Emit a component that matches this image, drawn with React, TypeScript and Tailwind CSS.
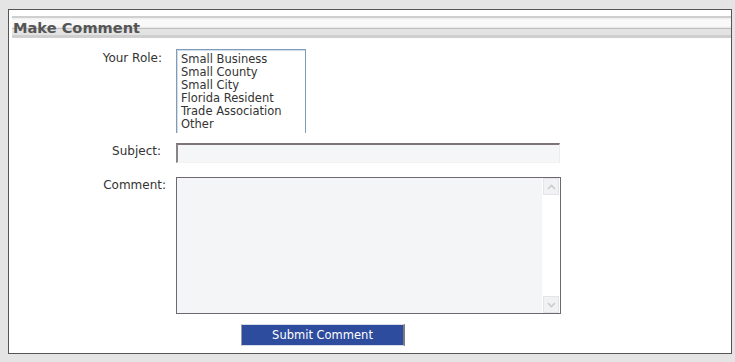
import React from "react";

const font = { fontFamily: '"DejaVu Sans", Verdana, sans-serif' };

export default function App() {
  const roles = [
    "Small Business",
    "Small County",
    "Small City",
    "Florida Resident",
    "Trade Association",
    "Other",
  ];
  return (
    <div
      className="w-[735px] h-[362px] bg-[#e4e4e4] pt-[9px] pl-[8px] overflow-hidden"
      style={font}
    >
      <div className="w-[724px] h-[345px] border border-[#555555] bg-white flex flex-col">
        {/* header bar */}
        <div className="mt-[6px] ml-[3px] h-[22px] relative bg-[linear-gradient(to_bottom,#cfcfcf_0px,#cfcfcf_2px,#ececec_2px,#f9f9f9_4px,#f9f9f9_10px,#e6e6e6_12px,#bfbfbf_12px,#bfbfbf_13px,#e3e3e3_13px,#e3e3e3_19px,#cfcfcf_19px,#cfcfcf_22px)]">
          <span className="absolute left-[1px] top-[2px] text-[14.6px] font-bold leading-[20px] text-[#555555]">
            Make Comment
          </span>
        </div>

        {/* Your Role */}
        <div className="flex mt-[11px]">
          <div className="w-[153px] text-right text-[12px] leading-[13px] text-[#333333] pt-[3px]">
            Your Role:
          </div>
          <div className="ml-[14px] w-[130px] h-[84px] border-t border-l border-r border-[#7f9db9] overflow-hidden">
            <div className="border-t border-l border-[#d3dce8] h-full pl-[3px] pt-[2px]">
              {roles.map((r) => (
                <div
                  key={r}
                  className="text-[11.5px] leading-[13px] text-[#333333] whitespace-nowrap"
                >
                  {r}
                </div>
              ))}
            </div>
          </div>
        </div>

        {/* Subject */}
        <div className="flex mt-[10px]">
          <div className="w-[152px] text-right text-[12px] leading-[13px] text-[#333333] pt-[2px]">
            Subject:
          </div>
          <div className="ml-[15px] w-[384px] h-[20px] bg-[#f5f6f7] border-t-2 border-l-2 border-t-[#7d7575] border-l-[#8a8585] border-r border-b border-r-[#ececec] border-b-[#f2f2f2]" />
        </div>

        {/* Comment */}
        <div className="flex mt-[14px]">
          <div className="w-[157px] text-right text-[12px] leading-[13px] text-[#333333] pt-[2px]">
            Comment:
          </div>
          <div className="ml-[10px] w-[385px] h-[137px] border border-[#6e6670] bg-[#f4f5f7] flex">
            <div className="flex-1" />
            <div className="w-[18px] bg-white flex flex-col justify-between pr-[1px]">
              <div className="h-[17px] w-[16px] ml-[1px] border border-[#e2e4e6] bg-[#f1f2f3] flex items-center justify-center">
                <svg width="9" height="6" viewBox="0 0 9 6">
                  <path d="M1 5 L4.5 1.5 L8 5" fill="none" stroke="#c9cbcd" strokeWidth="1.6" />
                </svg>
              </div>
              <div className="h-[17px] w-[16px] ml-[1px] border border-[#e2e4e6] bg-[#f1f2f3] flex items-center justify-center">
                <svg width="9" height="6" viewBox="0 0 9 6">
                  <path d="M1 1 L4.5 4.5 L8 1" fill="none" stroke="#c9cbcd" strokeWidth="1.6" />
                </svg>
              </div>
            </div>
          </div>
        </div>

        {/* Submit */}
        <div className="flex mt-[10px] pl-[232px]">
          <button className="w-[164px] h-[22px] bg-[#2e4c9e] text-white text-[11.5px] leading-[20px] border-l border-t border-b border-l-[#9a9aa5] border-t-[#d8dce8] border-b-[#d8dce8] border-r-2 border-r-[#7a7a82]">
            Submit Comment
          </button>
        </div>
      </div>
    </div>
  );
}
